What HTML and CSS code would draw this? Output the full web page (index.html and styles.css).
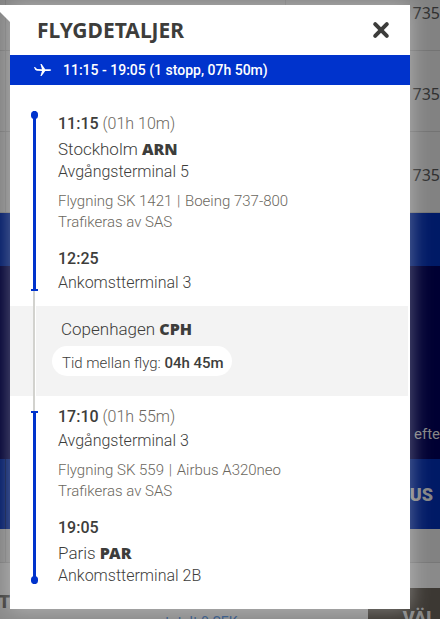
FILE: index.html
```html
<!DOCTYPE html>
<html lang="sv">
<head>
<meta charset="utf-8">
<meta name="viewport" content="width=device-width, initial-scale=1">
<title>Flygdetaljer</title>
<link rel="stylesheet" href="styles.css">
</head>
<body>
<div class="stage">
  <div class="page" aria-hidden="true">
    <div class="fare fare-first">735</div>
    <div class="fare">735</div>
    <div class="fare">735</div>
    <div class="band band-head"></div>
    <div class="band band-dark">efte</div>
    <div class="band band-plus">US</div>
    <div class="spacer"></div>
    <div class="footer">
      <span class="footer-label">OT</span>
      <span class="footer-price">totalt 0 SEK</span>
      <span class="footer-choose">VÄL</span>
    </div>
  </div>

  <section class="dialog" role="dialog" aria-labelledby="title">
    <header class="dialog-head">
      <h1 id="title">FLYGDETALJER</h1>
      <button class="close" type="button" aria-label="Stäng">
        <svg viewBox="0 0 18 18" width="18" height="18"><path d="M3.2 3.2 14.8 14.8M14.8 3.2 3.2 14.8" fill="none" stroke="currentColor" stroke-width="4" stroke-linecap="round"/></svg>
      </button>
    </header>
    <div class="summary">
      <svg viewBox="0 0 18 14" width="18" height="14"><path fill="currentColor" d="M0 4h1l2 2.1 5 .1L6.4 1h1.2l3.6 5.200h4.200c1 0 1.800.3 1.800.8s-.8.9-1.800.9h-4.200L7.600 13H6.400L8 7.900l-4.200-.1C2.400 7.700 1.400 7.200 1 6.500z"/></svg>
      <span>11:15 - 19:05 (1 stopp, 07h 50m)</span>
    </div>

    <div class="leg leg-first">
      <div class="rail"><i class="line"></i><i class="wait"></i></div>
      <div class="info">
        <p class="time"><b>11:15</b> <span class="muted">(01h 10m)</span></p>
        <p class="city">Stockholm <b>ARN</b></p>
        <p class="terminal">Avgångsterminal 5</p>
        <div class="flight"><p>Flygning SK 1421 <span class="bar">|</span> Boeing 737-800</p><p>Trafikeras av SAS</p></div>
        <p class="time"><b>12:25</b></p>
        <p class="terminal">Ankomstterminal 3</p>
      </div>
    </div>

    <div class="stop">
      <div class="rail"><i class="wait"></i></div>
      <div class="stop-info">
        <p class="city">Copenhagen <b>CPH</b></p>
        <p class="pill">Tid mellan flyg: <b>04h 45m</b></p>
      </div>
    </div>

    <div class="leg leg-last">
      <div class="rail"><i class="wait"></i><i class="line"></i></div>
      <div class="info">
        <p class="time"><b>17:10</b> <span class="muted">(01h 55m)</span></p>
        <p class="terminal">Avgångsterminal 3</p>
        <div class="flight"><p>Flygning SK 559 <span class="bar">|</span> Airbus A320neo</p><p>Trafikeras av SAS</p></div>
        <p class="time"><b>19:05</b></p>
        <p class="city">Paris <b>PAR</b></p>
        <p class="terminal">Ankomstterminal 2B</p>
      </div>
    </div>
  </section>
</div>
</body>
</html>
```
FILE: styles.css
```css
* { box-sizing: border-box; }
body {
  margin: 0;
  overflow: hidden;
  background: #828282;
  color: #3d3d3b;
  font-family: Roboto, "Liberation Sans", sans-serif;
  font-size: 16px;
  font-weight: 300;
}
p, h1 { margin: 0; }
.stage { display: grid; min-height: 100vh; }
.page, .dialog { grid-area: 1 / 1; }

/* Dimmed booking page behind the dialog */
.page {
  display: grid;
  grid-template-rows: 51px 81px 81px 53px 193px 70px 34px 1fr;
  font-weight: 400;
}
.fare {
  display: flex;
  justify-content: flex-end;
  align-items: center;
  padding-top: 6px;
  border-bottom: 1px solid #737373;
  color: #303030;
  font-family: "Noto Sans", sans-serif;
  background: linear-gradient(#777, #777) 5px 0 / 1px 100% no-repeat;
}
.fare-first {
  padding: 0 0 24px;
  background:
    linear-gradient(#777, #777) 5px 0 / 1px 100% no-repeat,
    linear-gradient(#777, #777) 285px 0 / 1px 100% no-repeat;
}
.band {
  display: flex;
  justify-content: flex-end;
  color: #858585;
  background: #001a66;
}
.band-dark { align-items: flex-end; padding-bottom: 16px; font-size: 15px; background: #000033; }
.band-plus {
  align-items: center;
  padding-right: 7px;
  font-size: 18px;
  font-weight: 900;
  background: linear-gradient(#001144, #001144) 5px 0 / 1px 100% no-repeat, #001a66;
}
.spacer { background: linear-gradient(#777, #777) 5px 0 / 1px 100% no-repeat; border-bottom: 1px solid #777; }
.footer {
  display: grid;
  grid-template-columns: 165px 203px 1fr;
  background: #8a8a8a;
}
.footer-label { padding: 28px 155px 0 0; direction: rtl; font-size: 18px; font-weight: 900; }
.footer-price { padding-top: 51px; font-size: 14px; line-height: 16px; height: 56px; overflow: hidden; color: #2c5080; }
.footer-choose {
  height: 31px;
  margin-top: 25px;
  padding: 19px 4px 0 0;
  overflow: hidden;
  text-align: right;
  font-size: 18px;
  font-weight: 900;
  color: #858585;
  background: #3c3833;
}

/* Dialog */
.dialog {
  position: relative;
  align-self: start;
  margin: 5px 30px 10px 10px;
  background: #fff;
  box-shadow: 0 0 20px rgba(255, 255, 255, .4);
}
.dialog::before {
  content: "";
  position: absolute;
  top: 0;
  left: -10px;
  width: 10px;
  height: 17px;
  background: #fff;
  clip-path: polygon(0 0, 100% 0, 100% 100%, 0 7px);
}
.dialog-head {
  display: flex;
  justify-content: space-between;
  align-items: center;
  height: 50px;
  padding: 0 20px 0 27px;
}
h1 { font: 700 21px/28px "Noto Sans", sans-serif; }
.close { display: flex; padding: 0; border: 0; background: none; color: #3d3d3b; }
.summary {
  display: flex;
  align-items: center;
  gap: 11px;
  height: 30px;
  padding-left: 24px;
  background: #0033cc;
  color: #fff;
  font-size: 14px;
  font-weight: 500;
}

.leg, .stop { display: grid; grid-template-columns: 48px 1fr; }
.rail { display: flex; flex-direction: column; align-items: center; }
.line { position: relative; flex: 1; width: 3px; background: #0033cc; }
.line::before, .line::after { content: ""; position: absolute; background: #0033cc; }
.leg-first .line::before, .leg-last .line::after { left: -2px; width: 7px; height: 8px; border-radius: 4px; }
.leg-first .line::before { top: 0; }
.leg-last .line::after { bottom: 0; }
.leg-first .line::after, .leg-last .line::before { left: -2px; width: 7px; height: 2px; }
.leg-first .line::after { bottom: 0; }
.leg-last .line::before { top: 0; }
.wait { width: 2px; height: 15px; background: #d2d2ce; }

.leg-first { padding-top: 26px; }
.info { padding-bottom: 12px; }
.leg-last .info { padding: 8px 0 22px; }
.leg-last .rail { padding-bottom: 25px; }
.time { line-height: 26px; }
.time b { font-weight: 500; }
.muted { color: #6b675e; }
.city { font-size: 17px; line-height: 24px; }
.city b { font: 900 16px/16px "Noto Sans", sans-serif; }
.terminal { line-height: 22px; }
.flight { margin: 8px 0 13px; font-size: 15px; line-height: 21px; color: #6b675e; }
.bar { margin: 0 1px; }

.stop { height: 90px; margin-right: 2px; background: #f3f3f3; }
.stop .wait { flex: 1; box-shadow: 1px 0 #fff; }
.stop-info { padding: 11px 0 0 3px; }
.pill {
  width: fit-content;
  margin: 5px 0 0 -9px;
  padding: 4px 8px 0 10px;
  border-radius: 15px;
  background: #fff;
  font-size: 15px;
  line-height: 26px;
}
.pill b { font-weight: 500; }
```
